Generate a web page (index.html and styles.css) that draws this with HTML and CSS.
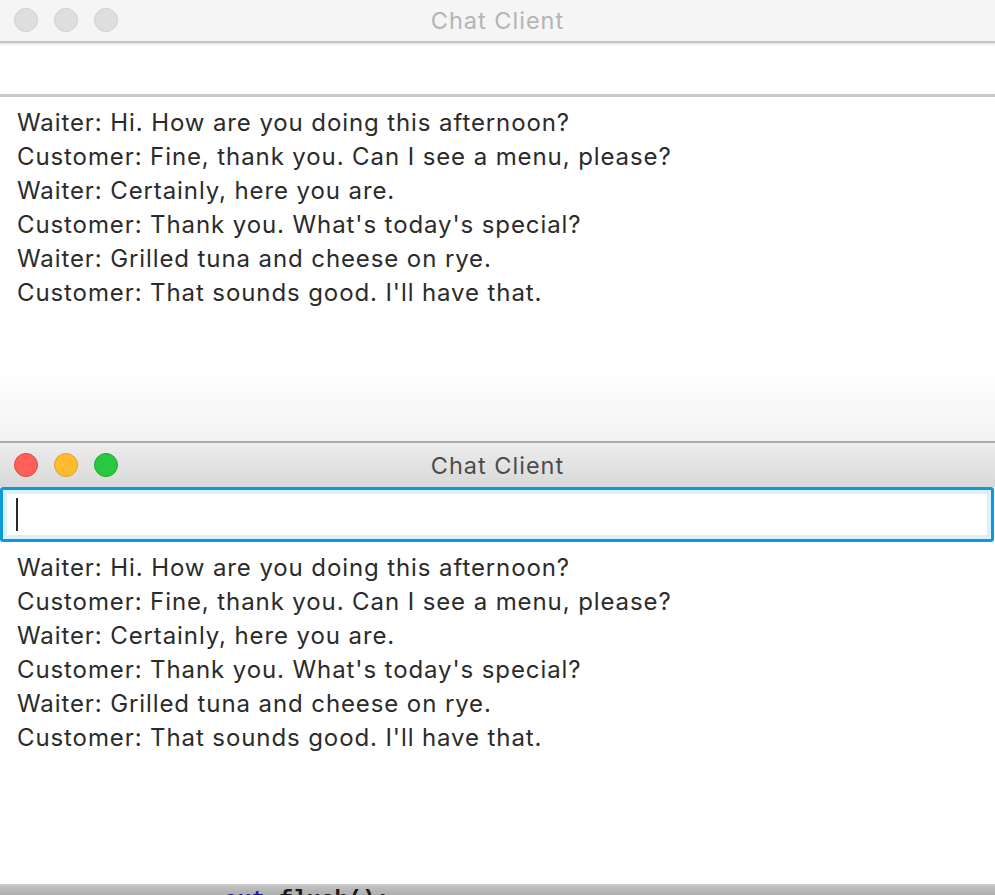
FILE: index.html
```html
<!DOCTYPE html>
<html>
<head>
<meta charset="utf-8">
<title>Chat Client</title>
<link rel="stylesheet" href="styles.css">
</head>
<body>
<div class="screen">
  <div class="window inactive">
    <div class="titlebar">
      <div class="lights">
        <span class="light"></span><span class="light"></span><span class="light"></span>
      </div>
      <div class="title">Chat Client</div>
    </div>
    <div class="field"></div>
    <div class="log">
      <div>Waiter: Hi. How are you doing this afternoon?</div>
      <div>Customer: Fine, thank you. Can I see a menu, please?</div>
      <div>Waiter: Certainly, here you are.</div>
      <div>Customer: Thank you. What's today's special?</div>
      <div>Waiter: Grilled tuna and cheese on rye.</div>
      <div>Customer: That sounds good. I'll have that.</div>
    </div>
  </div>
  <div class="window active">
    <div class="titlebar">
      <div class="lights">
        <span class="light red"></span><span class="light yellow"></span><span class="light green"></span>
      </div>
      <div class="title">Chat Client</div>
    </div>
    <div class="field focused"><span class="caret"></span></div>
    <div class="log">
      <div>Waiter: Hi. How are you doing this afternoon?</div>
      <div>Customer: Fine, thank you. Can I see a menu, please?</div>
      <div>Waiter: Certainly, here you are.</div>
      <div>Customer: Thank you. What's today's special?</div>
      <div>Waiter: Grilled tuna and cheese on rye.</div>
      <div>Customer: That sounds good. I'll have that.</div>
    </div>
  </div>
  <div class="desk"><span class="code"><span class="kw">out</span>.flush();</span></div>
</div>
</body>
</html>
```
FILE: styles.css
```css
html, body {
  margin: 0;
  padding: 0;
  background: #b4b4b4;
}
body {
  width: 995px;
  height: 895px;
  overflow: hidden;
  font-family: Inter, "Liberation Sans", Arial, sans-serif;
}
.screen {
  display: flex;
  flex-direction: column;
  height: 895px;
}
.window {
  display: flex;
  flex-direction: column;
  background: #fff;
  flex: none;
}
.titlebar {
  position: relative;
  display: flex;
  align-items: center;
  justify-content: center;
  box-sizing: border-box;
}
.inactive .titlebar {
  height: 43px;
  background: #f5f5f5;
  border-bottom: 2px solid #c5c5c5;
}
.active .titlebar {
  height: 46px;
  background: linear-gradient(#ededed, #d8d8d8);
  border-top: 2px solid #a9a9a9;
}
.lights {
  position: absolute;
  left: 14px;
  top: 50%;
  transform: translateY(-50%);
  display: flex;
  gap: 16px;
}
.inactive .lights { margin-top: -1px; }
.active .lights { margin-top: 0; }
.light {
  width: 22px;
  height: 22px;
  border-radius: 50%;
  background: #dedede;
  border: 1px solid #d0d0d0;
}
.light.red { background: #fe5f57; border-color: #e2463f; }
.light.yellow { background: #febc2e; border-color: #e0a028; }
.light.green { background: #28c840; border-color: #1aab29; }
.title {
  font-size: 23.5px;
  letter-spacing: 1px;
}
.inactive .title { color: #b4b4b4; margin-top: -1px; }
.active .title { color: #4b4b4b; margin-top: 0; }
.field {
  box-sizing: border-box;
  height: 54px;
  background: #fff;
}
.inactive .field {
  border-bottom: 3px solid #c8c8c8;
  box-shadow: inset 0 3px 3px -2px #dcdcdc;
}
.field.focused {
  height: 55px;
  border: 3px solid #0a9bd8;
  box-shadow: inset 0 0 0 4px #dcf0fa;
  border-radius: 3px;
  display: flex;
  align-items: center;
  padding-left: 13px;
  margin-right: 1px;
}
.caret {
  width: 2px;
  height: 33px;
  background: #2a2a2a;
}
.log {
  box-sizing: border-box;
  padding: 9px 0 0 17px;
  font-size: 24px;
  line-height: 34px;
  color: #2b2b2b;
  letter-spacing: 0.9px;
}
.inactive .log {
  height: 344px;
  background: linear-gradient(#fff 0, #fff 270px, #f3f3f3 344px);
}
.active .log {
  height: 344px;
  border-bottom: 2px solid #c9c9c9;
  padding-top: 9px;
}
.desk {
  flex: 1;
  background: linear-gradient(#c2c2c2, #adadad);
  overflow: hidden;
  padding-left: 224px;
}
.code {
  display: block;
  font-family: "Liberation Mono", monospace;
  font-weight: bold;
  font-size: 23px;
  line-height: 24px;
  margin-top: 3px;
  color: #1a1a1a;
}
.kw { color: #1e1a8c; }
```
